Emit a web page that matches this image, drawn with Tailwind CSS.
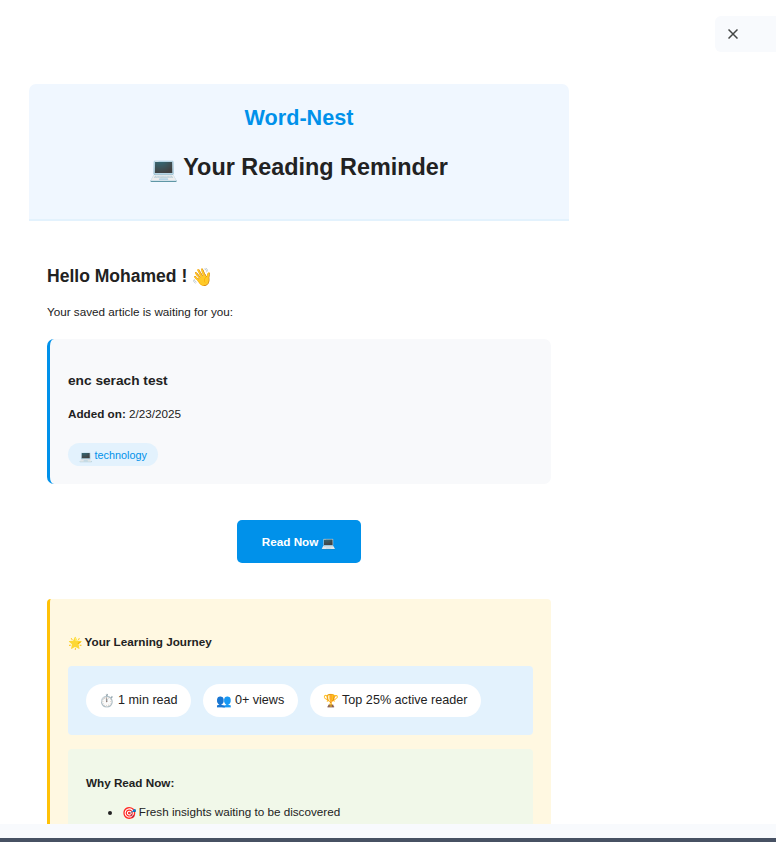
<!DOCTYPE html>
<html lang="en">
<head>
<meta charset="utf-8">
<title>Word-Nest</title>
<script src="https://cdn.jsdelivr.net/npm/@tailwindcss/browser@4"></script>
</head>
<body class="bg-white">
<div class="h-[842px] w-[776px] overflow-hidden flex flex-col bg-white text-[#222222] text-[11.7px] leading-[18px] font-['Liberation_Sans','Noto_Color_Emoji',sans-serif]">
  <header class="flex justify-end pt-4 h-[84px] shrink-0">
    <button class="w-[61px] h-9 rounded-l-md bg-[#f8fafd] flex items-center pl-[13px]" aria-label="Close">
      <svg width="10" height="10" viewBox="0 0 10 10" fill="none" stroke="#444746" stroke-width="1.5"><path d="M.5 .5 9.5 9.5M9.5 .5 .5 9.5"/></svg>
    </button>
  </header>
  <main class="flex-1 min-h-0 overflow-hidden pl-[29px]">
    <div class="w-[540px]">
      <div class="h-[137px] bg-[#f0f7ff] rounded-t-[7px] border-b-2 border-[#e3f2fd] text-center pt-[17px]">
        <div class="text-[21.6px] leading-[34px] font-bold text-[#0091ea]">Word-Nest</div>
        <h1 class="mt-[14px] -ml-px text-[23.4px] leading-[37px] font-bold"><span class="relative top-[2px] -mr-px">💻</span> Your Reading Reminder</h1>
      </div>
      <div class="px-[18px] pt-[40px]">
        <h2 class="mt-px text-[17.55px] leading-7 font-bold">Hello Mohamed ! <span class="relative top-px -ml-px">👋</span></h2>
        <p class="mt-[13px]">Your saved article is waiting for you:</p>
        <section class="mt-[18px] h-[145px] bg-[#f8f9fb] border-l-3 border-[#0091ea] rounded-[7px] pl-[18px] pt-[31px]">
          <h3 class="text-[13.69px] leading-[22px] font-bold">enc serach test</h3>
          <p class="mt-[13px]"><strong>Added on:</strong> 2/23/2025</p>
          <div class="mt-5 flex w-[90px] h-[23px] items-center justify-center rounded-full bg-[#e3f2fd] text-[10.8px] text-[#0091ea] whitespace-nowrap"><p><span class="relative top-px -mr-px">💻</span> technology</p></div>
        </section>
        <a class="mt-9 mx-auto w-[124px] h-[43px] flex items-center justify-center rounded-[5px] bg-[#0091ea] text-white font-bold"><p>Read Now <span class="relative top-px">💻</span></p></a>
        <section class="mt-9 h-[400px] bg-[#fff8e1] border-l-3 border-[#ffc107] rounded-[4px] px-[18px] pt-[34px]">
          <h4 class="font-bold"><span class="relative top-px -mr-px">🌟</span> Your Learning Journey</h4>
          <div class="mt-[15px] h-[69px] rounded-[4px] bg-[#e3f2fd] flex items-center gap-3 px-[18px] text-[12.6px] whitespace-nowrap">
            <div class="w-[105px] h-[33px] pb-[2px] rounded-full bg-white flex items-center justify-center"><p><span class="relative top-px -mr-[.5px]">⏱️</span> 1 min read</p></div>
            <div class="w-[95px] h-[33px] pb-[2px] rounded-full bg-white flex items-center justify-center"><p><span class="relative top-px -mr-px">👥</span> 0+ views</p></div>
            <div class="w-[171px] h-[33px] pb-[2px] rounded-full bg-white flex items-center justify-center"><p><span class="relative top-px -mr-[.5px]">🏆</span> Top 25% active reader</p></div>
          </div>
          <div class="mt-[14px] h-[200px] rounded-[4px] bg-[#f1f8e9] px-[18px] pt-[25px]">
            <h4 class="font-bold">Why Read Now:</h4>
            <ul class="mt-[11px] pl-9 list-disc"><li><span class="relative top-px -mr-px">🎯</span> Fresh insights waiting to be discovered</li></ul>
          </div>
        </section>
      </div>
    </div>
  </main>
  <footer class="h-[18px] shrink-0 bg-[#f8fafd] border-b-4 border-[#475163]"></footer>
</div>
</body>
</html>
